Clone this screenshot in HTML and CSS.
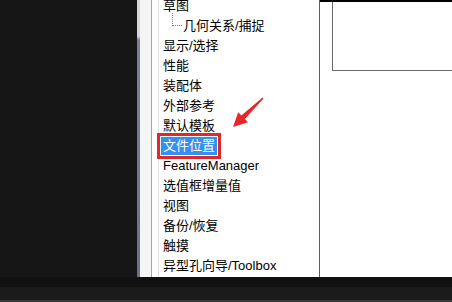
FILE: index.html
```html
<!DOCTYPE html>
<html lang="zh-CN">
<head>
    <meta charset="UTF-8">
    <title>系统选项 - 文件位置</title>
    <link rel="stylesheet" href="styles.css">
</head>
<body>
    <div class="desk">
        <div class="top">
            <div class="dark-left"></div>
            <div class="window">
                <div class="frame-edge"></div>
                <div class="gutter"></div>
                <div class="pad"></div>
                <ul class="tree">
                    <li>草图</li>
                    <li class="child"><span class="branch"></span>几何关系/捕捉</li>
                    <li>显示/选择</li>
                    <li>性能</li>
                    <li>装配体</li>
                    <li>外部参考</li>
                    <li>默认模板</li>
                    <li><span class="selected">文件位置</span></li>
                    <li>FeatureManager</li>
                    <li>选值框增量值</li>
                    <li>视图</li>
                    <li>备份/恢复</li>
                    <li>触摸</li>
                    <li>异型孔向导/Toolbox</li>
                </ul>
                <div class="pane">
                    <div class="preview"></div>
                </div>
            </div>
        </div>
        <div class="bottom"></div>

        <!-- annotation arrow pointing at the selected item -->
        <svg class="arrow" width="40" height="38" viewBox="0 0 40 38">
            <polygon points="7,33 12.2,18.2 15.4,21.4 36.5,3.5 37.5,4.5 18.9,25 22,28.2" fill="#e5262a"/>
        </svg>
    </div>
</body>
</html>
```

FILE: styles.css
```css
body {
    margin: 0;
    background-color: #161616;
    font-family: "Liberation Sans", "Noto Sans CJK SC", sans-serif;
}
.desk {
    position: relative;
    width: 452px;
    height: 302px;
    display: flex;
    flex-direction: column;
    overflow: hidden;
}
.top {
    display: flex;
    height: 277px;
}
.dark-left {
    width: 137px;
    background-color: #161616;
}
.window {
    flex: 1;
    display: flex;
    background-color: #fff;
}
.frame-edge {
    width: 3px;
    background: linear-gradient(#d8d8dc 0, #d8d8dc 36px, #7c8296 40px, #6a7088 100%);
}
.gutter {
    width: 11px;
    background-color: #f5f5f5;
    border-right: 1px solid #a4a4a4;
}
.pad {
    width: 6px;
    background-color: #fff;
    border-right: 1px solid #e2e2e2;
}
.tree {
    list-style: none;
    margin: 0;
    padding: 0 0 0 4px;
    width: 156px;
    border-right: 1px solid #5c5c5c;
    font-size: 13px;
    color: #000;
}
.tree li {
    height: 20px;
    line-height: 20px;
    white-space: nowrap;
}
.tree li:first-child {
    margin-top: -4px;
}
.tree li.child {
    position: relative;
    padding-left: 20px;
}
.branch {
    position: absolute;
    left: 9px;
    top: -3px;
    width: 9px;
    height: 12px;
    border-left: 1px dotted #808080;
    border-bottom: 1px dotted #808080;
}
.selected {
    display: inline-block;
    line-height: 18px;
    padding: 0 2px;
    margin-left: -2px;
    background-color: #3390f0;
    color: #fff;
    outline: 3px solid #e0282c;
    outline-offset: 1px;
}
.pane {
    flex: 1;
    border-top: 2px solid #000;
    padding-left: 12px;
}
.preview {
    height: 68px;
    border-left: 1px solid #6a6a6a;
    border-bottom: 1px solid #6a6a6a;
}
.bottom {
    height: 25px;
    background: linear-gradient(#101010 0, #101010 10px, #1b1b1b 10px, #1b1b1b 23px, #3a3a3a 23px);
}
.arrow {
    position: absolute;
    left: 226px;
    top: 94px;
}
```
